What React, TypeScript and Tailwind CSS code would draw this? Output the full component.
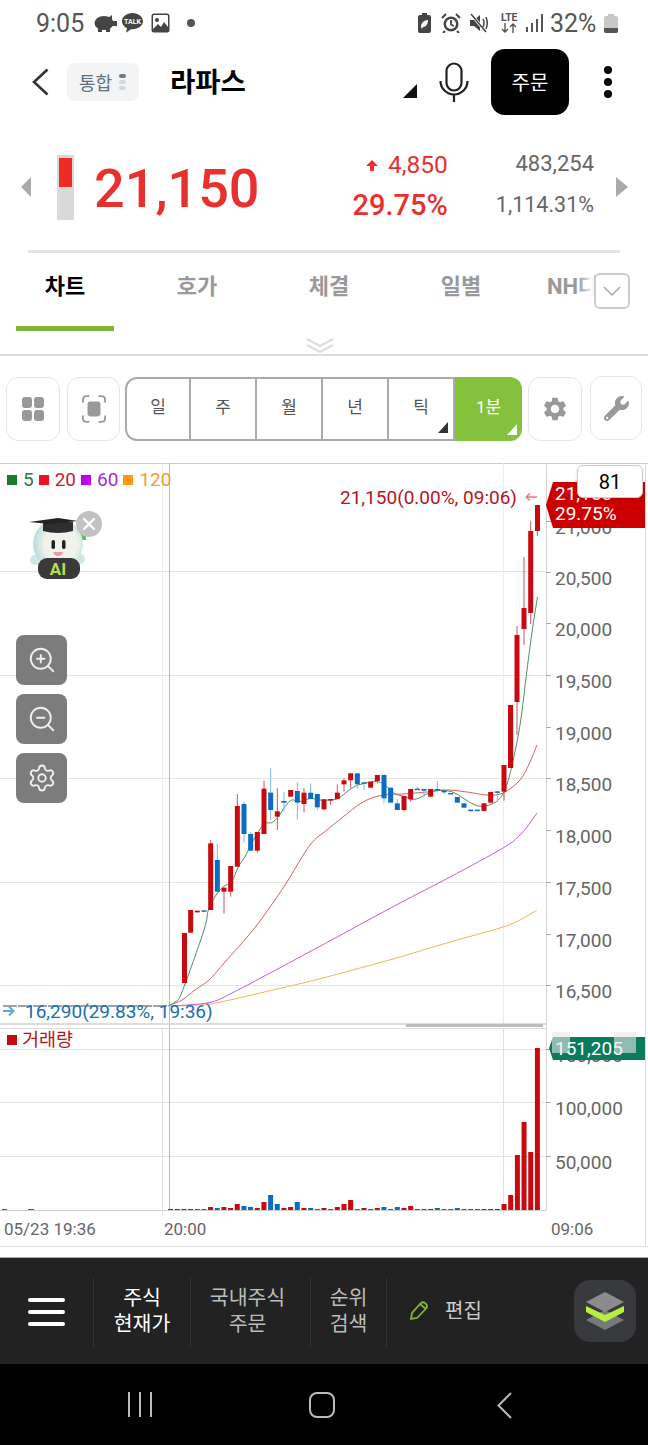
import React from "react";
import { Settings, ZoomIn, ZoomOut } from "lucide-react";
import { FaWrench } from "react-icons/fa";
import { MdSettings } from "react-icons/md";

const RED = "#c60a10";
const BLUE = "#0a6cc2";

// candles: x, bodyTop, bodyBottom, wickTop, wickBottom in crop units (170,750 at 3x)
const candles: [number, number, number, number, number, "r" | "b"][] = [
  [62, 480, 548, 480, 548, "r"], [82, 482, 487, 482, 487, "r"], [102, 481, 484, 481, 484, "b"],
  [122, 280, 480, 270, 480, "r"], [142, 330, 425, 282, 425, "b"], [162, 413, 425, 413, 490, "r"],
  [182, 348, 425, 348, 440, "r"], [202, 168, 350, 132, 350, "r"], [222, 162, 252, 155, 278, "b"],
  [242, 252, 302, 245, 302, "b"], [262, 246, 302, 246, 308, "r"], [282, 116, 252, 92, 252, "r"],
  [302, 128, 180, 55, 210, "b"], [322, 184, 200, 115, 240, "r"], [342, 153, 158, 125, 185, "b"],
  [362, 120, 140, 120, 140, "r"], [382, 123, 158, 97, 208, "b"], [402, 128, 162, 115, 187, "r"],
  [422, 128, 147, 100, 147, "b"], [442, 132, 172, 132, 180, "b"], [462, 148, 178, 148, 180, "r"],
  [482, 147, 150, 147, 165, "r"], [502, 128, 147, 103, 147, "r"], [522, 91, 103, 85, 125, "r"],
  [542, 70, 91, 70, 115, "r"], [562, 70, 103, 70, 115, "b"], [582, 97, 100, 97, 120, "b"],
  [602, 95, 113, 95, 113, "r"], [622, 75, 93, 75, 100, "r"], [642, 75, 145, 72, 160, "b"],
  [662, 113, 158, 113, 158, "b"], [682, 160, 180, 148, 180, "b"], [702, 138, 180, 138, 185, "r"],
  [722, 117, 148, 117, 155, "r"], [742, 116, 119, 110, 119, "b"], [762, 117, 122, 117, 140, "b"],
  [782, 117, 140, 117, 140, "r"], [802, 117, 119, 93, 125, "b"], [822, 122, 127, 117, 132, "b"],
  [842, 129, 132, 129, 132, "b"], [862, 141, 158, 141, 158, "b"], [882, 160, 173, 160, 173, "b"],
  [902, 179, 181, 179, 185, "b"], [922, 179, 183, 179, 183, "b"], [942, 160, 183, 160, 183, "r"],
  [962, 126, 158, 126, 158, "r"], [982, 124, 127, 124, 155, "b"], [1002, 45, 125, 45, 152, "r"],
  [1022, -135, 53, -135, 53, "r"],
];

const greenPoints: [number, number][] = [
  [102, 540], [115, 480], [135, 440], [160, 410], [185, 395], [205, 350], [225, 320], [245, 280], [265, 245], [285, 220],
  [305, 218], [325, 200], [345, 170], [365, 150], [385, 155], [405, 150], [425, 145], [445, 150], [465, 150], [485, 150],
  [505, 145], [525, 130], [545, 115], [565, 105], [585, 100], [605, 95], [625, 95], [645, 105], [665, 125], [685, 135],
  [705, 140], [725, 148], [745, 145], [765, 135], [785, 125], [805, 120], [825, 122], [845, 125], [865, 135], [885, 148],
  [905, 160], [925, 168], [945, 168], [965, 162], [985, 150], [1005, 120], [1025, 50],
];

type Pt = [number, number];

// catmull-rom through the points so the averages don't look kinked
const smooth = (pts: Pt[]) => {
  let d = `M${pts[0][0]} ${pts[0][1]}`;
  for (let i = 0; i < pts.length - 1; i++) {
    const p0 = pts[Math.max(i - 1, 0)];
    const p1 = pts[i];
    const p2 = pts[i + 1];
    const p3 = pts[Math.min(i + 2, pts.length - 1)];
    const c1x = p1[0] + (p2[0] - p0[0]) / 6;
    const c1y = p1[1] + (p2[1] - p0[1]) / 6;
    const c2x = p2[0] - (p3[0] - p1[0]) / 6;
    const c2y = p2[1] - (p3[1] - p1[1]) / 6;
    d += `C${c1x} ${c1y} ${c2x} ${c2y} ${p2[0]} ${p2[1]}`;
  }
  return d;
};

const greenLine = smooth([
  [168, 1006], [175, 1002], [182, 992],
  ...greenPoints.map((p): Pt => [170 + p[0] / 3, 750 + p[1] / 3]),
  [520, 725], [527, 670], [532, 632], [537.5, 597],
]);
const redLine = smooth([
  [170, 1005], [182, 1000], [195, 990], [209, 980], [225, 962], [253, 930], [270, 907], [287, 882], [310, 845], [327, 830],
  [343, 817], [363, 802], [383, 795], [403, 794], [427, 792], [447, 790], [467, 792], [487, 795], [503, 793], [520, 780], [530, 762], [537, 745],
]);
const purpleLine = smooth([
  [170, 1006], [187, 1005], [212, 1002], [232, 993], [257, 980], [300, 957], [350, 930], [400, 903], [450, 877], [503, 848], [520, 835], [530, 823], [537, 813],
]);
const orangeLine = smooth([
  [175, 1006], [199, 1005], [216, 1003], [260, 993], [315, 980], [360, 968], [400, 957], [450, 942], [500, 928], [520, 920], [537, 910],
]);

const priceTicks = [521, 572, 623, 675, 727, 778, 830, 882, 934, 985];
const priceLabels = ["21,000", "20,500", "20,000", "19,500", "19,000", "18,500", "18,000", "17,500", "17,000", "16,500"];
const gridLines = [571.5, 675.5, 778.5, 882.5, 985.5, 1049.5, 1102.5, 1156.5];

// volume bars from x=170 to the last candle, height in px
const volumes: [number, string][] = [
  [1, "r"], [1, "r"], [1, "r"], [1, "r"], [1, "g"], [1, "g"], [3, "r"], [2, "b"], [3, "r"], [2, "r"],
  [6, "r"], [4, "b"], [3, "b"], [2, "r"], [8, "r"], [15, "b"], [6, "b"], [2, "r"], [3, "r"], [8, "b"],
  [2, "r"], [2, "b"], [1, "b"], [2, "r"], [1, "g"], [3, "r"], [6, "r"], [10, "r"], [1, "b"], [2, "r"],
  [1, "b"], [2, "r"], [3, "b"], [1, "b"], [3, "b"], [2, "r"], [4, "r"], [1, "g"], [1, "g"], [1, "r"],
  [2, "g"], [1, "b"], [1, "b"], [2, "b"], [1, "b"], [1, "b"], [1, "b"], [1, "r"], [1, "r"], [1, "r"],
  [6, "r"], [15, "r"], [55, "r"], [88, "r"], [58, "r"], [162, "r"],
];
const barColor: Record<string, string> = { r: RED, b: BLUE, g: "#157a55" };

const PriceChart = () => (
  <svg viewBox="0 463 648 784" width={648} height={784} className="block">
    {/* grid */}
    {gridLines.map((y) => (
      <line key={y} x1={0} x2={546} y1={y} y2={y} stroke="#e6e6e6" />
    ))}
    <line x1={162.5} x2={162.5} y1={463} y2={1023} stroke="#ececec" />
    <line x1={503.5} x2={503.5} y1={463} y2={1023} stroke="#ececec" />
    <line x1={162.5} x2={162.5} y1={1028} y2={1215} stroke="#e0e0e0" />
    <line x1={503.5} x2={503.5} y1={1028} y2={1215} stroke="#e0e0e0" />
    <line x1={169.5} x2={169.5} y1={463} y2={1210} stroke="#eaa4a8" />

    {/* moving averages */}
    <line x1={3} x2={168} y1={1006} y2={1006} stroke="#444" strokeDasharray="14 1" />
    <path d={orangeLine} fill="none" stroke="#ecb85c" />
    <path d={purpleLine} fill="none" stroke="#c060e0" />
    <path d={redLine} fill="none" stroke="#d86060" />
    <path d={greenLine} fill="none" stroke="#4f8f60" />

    {/* candles */}
    <line x1={184.5} x2={184.5} y1={933} y2={983} stroke={RED} strokeWidth={5} />
    {candles.map(([x, top, bottom, wickTop, wickBottom, c]) => {
      const px = 170 + x / 3;
      const color = c === "r" ? RED : BLUE;
      return (
        <g key={x}>
          <line x1={px} x2={px} y1={750 + wickTop / 3} y2={750 + wickBottom / 3} stroke={c === "r" ? "#d0555a" : "#7ab8e8"} />
          <rect x={px - 2.5} y={750 + top / 3} width={5} height={Math.max((bottom - top) / 3, 1.5)} fill={color} />
        </g>
      );
    })}
    <line x1={517} x2={517} y1={626} y2={735} stroke="#b06060" />
    <rect x={514.5} y={635} width={5} height={67} fill={RED} />
    <rect x={508} y={705} width={5} height={63} fill={RED} />
    <line x1={524} x2={524} y1={557} y2={645} stroke="#d0555a" />
    <rect x={521.5} y={608} width={5} height={21} fill={RED} />
    <line x1={530.7} x2={530.7} y1={521} y2={624} stroke="#d0555a" />
    <rect x={528.2} y={531} width={5} height={82} fill={RED} />
    <line x1={537.4} x2={537.4} y1={505} y2={536} stroke="#d0555a" />
    <rect x={535} y={505} width={5} height={26} fill={RED} />

    {/* price axis */}
    <line x1={546.5} x2={546.5} y1={463} y2={1210} stroke="#d4d4d4" />
    {priceTicks.map((y, i) => (
      <g key={y}>
        <line x1={546} x2={551} y1={y + 0.5} y2={y + 0.5} stroke="#aaa" />
        <text x={555} y={y + 13} fontSize={19} fill="#666">
          {priceLabels[i]}
        </text>
      </g>
    ))}
    <text x={340} y={504} fontSize={19} fill="#b8141c">
      21,150(0.00%, 09:06)
    </text>
    <path d="M526 497h11M526 497l4-3.5M526 497l4 3.5" fill="none" stroke="#e87a7a" strokeWidth={1.6} />
    <path d="M546 505l7-23h92v46h-92z" fill="#cc0000" />
    <text x={555} y={500} fontSize={19} fill="#fff">
      21,150
    </text>
    <text x={555} y={520} fontSize={19} fill="#fff">
      29.75%
    </text>
    <path d="M3 1011h10M9 1006.5l4.5 4.5-4.5 4.5" fill="none" stroke="#55aaf0" strokeWidth={2} />
    <text x={25} y={1018} fontSize={19} fill="#1a6fb0">
      16,290(29.83%, 19:36)
    </text>

    {/* panel split */}
    <rect x={0} y={1023} width={546} height={2} fill="#dddddd" />
    <rect x={406} y={1024} width={137} height={3} fill="#bdbdbd" />
    <rect x={0} y={1028} width={546} height={1} fill="#dddddd" />

    {/* volume */}
    <line x1={0} x2={546} y1={1210.5} y2={1210.5} stroke="#cfcfcf" />
    <rect x={2} y={1209} width={5} height={1} fill="#157a55" />
    <rect x={28} y={1209} width={6} height={1} fill="#157a55" />
    {volumes.map(([h, c], i) => (
      <rect key={i} x={537.4 - 6.67 * (volumes.length - 1 - i) - 2.5} y={1210 - h} width={5} height={h} fill={barColor[c]} />
    ))}
    {[
      { y: 1049, label: "150,000" },
      { y: 1102, label: "100,000" },
      { y: 1156, label: "50,000" },
    ].map(({ y, label }) => (
      <g key={label}>
        <line x1={546} x2={551} y1={y + 0.5} y2={y + 0.5} stroke="#aaa" />
        <text x={555} y={y + 13} fontSize={19} fill="#666">
          {label}
        </text>
      </g>
    ))}
    <path d="M549 1048l4-11h92v23h-92z" fill="#0c7b5d" />
    <text x={555} y={1055} fontSize={19} fill="#fff">
      151,205
    </text>
    <rect x={552} y={1032} width={18} height={21} fill="#e8e8e8" opacity={0.6} />
    <rect x={614} y={1032} width={22} height={21} fill="#e8e8e8" opacity={0.6} />

    {/* time axis */}
    <text x={4} y={1235} fontSize={17} fill="#666">
      05/23 19:36
    </text>
    <text x={164} y={1235} fontSize={17} fill="#666">
      20:00
    </text>
    <text x={551} y={1235} fontSize={17} fill="#666">
      09:06
    </text>
  </svg>
);

const AiBuddy = () => (
  <svg viewBox="26 508 78 76" width={78} height={76} className="block">
    <defs>
      <radialGradient id="head" cx="0.55" cy="0.5" r="0.6">
        <stop offset="0.55" stopColor="#f1f3ea" />
        <stop offset="1" stopColor="#a9d6da" />
      </radialGradient>
    </defs>
    <rect x={78} y={533} width={8} height={7} fill="#5cc05c" />
    <circle cx={35} cy={560} r={5} fill="#cfe6e6" />
    <circle cx={80} cy={559} r={5} fill="#cfe6e6" />
    <circle cx={58} cy={544} r={25} fill="url(#head)" />
    <path d="M43 522h30v9q-15 4-30 0z" fill="#2e2e2e" />
    <path d="M29 522l29-4 20 3-28 3z" fill="#222" />
    <rect x={51.5} y={540} width={3.5} height={9} rx={1.7} fill="#222" />
    <rect x={62} y={540} width={3.5} height={9} rx={1.7} fill="#222" />
    <path d="M53 552h10q-1 4-5 4t-5-4z" fill="#ee9aa6" />
    <rect x={38} y={558} width={42} height={21} rx={9} fill="#3a3a3a" />
    <text x={58} y={575} fontSize={17} fontWeight={700} textAnchor="middle" fill="#b4e04a">
      AI
    </text>
    <circle cx={89} cy={524} r={13} fill="#c2c2c2" />
    <path d="M84 519l10 10M94 519l-10 10" stroke="#fff" strokeWidth={2.4} strokeLinecap="round" />
  </svg>
);

const ChartTool = ({ children }: { children: React.ReactNode }) => (
  <div className="w-[51px] h-[50px] rounded-lg bg-[#6e6e6e]/90 flex items-center justify-center text-[#eeeeee]">
    {children}
  </div>
);

const LegendItem = ({ box, text, label }: { box: string; text: string; label: string }) => (
  <div className="flex items-center gap-[6px]">
    <span className={`w-[10px] h-[10px] ${box}`}></span>
    <span className={`text-[19px] leading-none ${text}`}>{label}</span>
  </div>
);

const StatusBar = () => (
  <div className="h-[46px] flex items-center pl-[36px] text-[#555555]">
    <span className="text-[25px] leading-none w-[57px]">9:05</span>
    <svg viewBox="0 0 24 18" width={24} height={18} fill="#444" className="mr-[4px]">
      <ellipse cx={11} cy={9} rx={9.5} ry={7} />
      <path d="M15 4l4-3v5zM17 7h7v5h-7zM5 14h4v4H5zM13 14h4v4h-4z" />
    </svg>
    <svg viewBox="0 0 23 22" width={23} height={22} className="mr-[7px]">
      <path d="M11.5 1C5.7 1 1 4.7 1 9.3c0 3 2 5.5 5 7l-1 4.5 5-3.6h1.5C17.3 17.2 22 13.6 22 9.3S17.3 1 11.5 1z" fill="#444" />
      <text x={11.5} y={12} fontSize={7} fontWeight={700} textAnchor="middle" fill="#fff">
        TALK
      </text>
    </svg>
    <svg viewBox="0 0 19 20" width={19} height={20} className="mr-[17px]">
      <rect x={0.5} y={0.5} width={18} height={19} rx={2.5} fill="#444" />
      <rect x={2} y={2} width={15} height={16} rx={1} fill="#fff" />
      <circle cx={6} cy={7} r={2} fill="#444" />
      <path d="M2 16l5-5 3 3 3-5 4 5v4H2z" fill="#444" />
    </svg>
    <span className="w-[8px] h-[8px] rounded-full bg-[#555555]"></span>

    <svg viewBox="0 0 13 20" width={13} height={20} className="ml-[223px]">
      <path d="M4 0h5v2h2q2 0 2 2v14q0 2-2 2H2q-2 0-2-2V4q0-2 2-2h2z" fill="#444" />
      <path d="M3 14c0-4 3-7 7-7 0 4-2 7-5 7l-1 2z" fill="#fff" />
    </svg>
    <svg viewBox="0 0 20 20" width={20} height={20} className="ml-[10px]">
      <circle cx={10} cy={11} r={7.5} fill="#444" />
      <circle cx={10} cy={11} r={5} fill="#fff" />
      <path d="M10 7v4.5l3 1.5" stroke="#444" strokeWidth={1.8} fill="none" />
      <path d="M1 5l4-4M19 5l-4-4M4 18l-2 2M16 18l2 2" stroke="#444" strokeWidth={2} />
    </svg>
    <svg viewBox="0 0 18 20" width={18} height={20} className="ml-[9px]">
      <path d="M0 7h4l6-5v16l-6-5H0z" fill="#444" />
      <path d="M1 1l15 18" stroke="#fff" strokeWidth={3} />
      <path d="M1 1l15 18" stroke="#444" strokeWidth={1.5} />
      <path d="M13 6q2 4 0 8M16 4q2.5 6 0 12" stroke="#444" strokeWidth={1.5} fill="none" />
    </svg>
    <div className="ml-[11px] w-[20px] h-[22px] flex flex-col items-center">
      <span className="text-[10.5px] leading-[11px] font-bold tracking-tight">LTE</span>
      <svg viewBox="0 0 18 10" width={18} height={10}>
        <path d="M5 0v9M2 6l3 3 3-3M13 10V1M10 4l3-3 3 3" stroke="#555" strokeWidth={1.4} fill="none" />
      </svg>
    </div>
    <svg viewBox="0 0 17 18" width={17} height={18} className="ml-[7px]" fill="#555">
      <rect x={0} y={13} width={2} height={5} />
      <rect x={5} y={9} width={2} height={9} />
      <rect x={10} y={5} width={2} height={13} />
      <rect x={15} y={0} width={2} height={18} />
    </svg>
    <span className="ml-[7px] text-[25px] leading-none w-[53px]">32%</span>
    <svg viewBox="0 0 14 19" width={14} height={19} className="ml-[1px]">
      <path d="M4 0h6v2h2q2 0 2 2v13q0 2-2 2H2q-2 0-2-2V4q0-2 2-2h2z" fill="#c8c8c8" />
      <path d="M0 14h14v3q0 2-2 2H2q-2 0-2-2z" fill="#555" />
    </svg>
  </div>
);

const Header = () => (
  <div className="h-[72px] flex items-center relative">
    <svg viewBox="0 0 18 28" width={18} height={28} fill="none" stroke="#333333" strokeWidth={2.6} className="ml-[31px]">
      <path d="M16.5 1.5L3 14l13.5 12.5" />
    </svg>
    <div className="ml-[18px] w-[72px] h-[38px] bg-[#f2f4f5] rounded-lg flex items-center pl-[12px] gap-[7px] text-[18px] text-[#5f707c]">
      <span className="pt-[2px]">통합</span>
      <div className="flex flex-col gap-[2px]">
        <span className="w-[7px] h-[4px] rounded-sm bg-[#6c7a84]"></span>
        <span className="w-[7px] h-[4px] rounded-sm bg-[#d5d9dc]"></span>
        <span className="w-[7px] h-[4px] rounded-sm bg-[#d5d9dc]"></span>
      </div>
    </div>
    <span className="ml-[31px] pt-[2px] text-[27.5px] font-bold text-black">라파스</span>
    <svg viewBox="0 0 14 14" width={14} height={14} className="absolute left-[403px] top-[38px]">
      <path d="M14 0v14H0z" fill="#111" />
    </svg>
    <svg viewBox="0 0 30 40" width={30} height={40} fill="none" stroke="#222" strokeWidth={2.2} className="ml-auto mr-[22px]">
      <rect x={7.5} y={1.5} width={15} height={27} rx={7.5} />
      <path d="M1.5 19a13.5 13.5 0 0 0 27 0M15 32.5V40" />
    </svg>
    <button className="w-[78px] h-[66px] rounded-[14px] bg-black text-white text-[20px] pt-[2px]">주문</button>
    <div className="w-[79px] pr-[2px] flex flex-col items-center gap-[4px]">
      <span className="w-[8px] h-[8px] rounded-full bg-black"></span>
      <span className="w-[8px] h-[8px] rounded-full bg-black"></span>
      <span className="w-[8px] h-[8px] rounded-full bg-black"></span>
    </div>
  </div>
);

const PriceRow = () => (
  <div className="h-[132px] pt-[6px] flex items-center relative">
    <svg viewBox="0 0 10 20" width={10} height={20} className="ml-[21px]">
      <path d="M10 0v20L0 10z" fill="#aaaaaa" />
    </svg>
    <div className="ml-[26px] w-[17px] h-[65px] bg-[#d9d9d9] px-[2px] pt-[3px]">
      <div className="h-[29px] bg-[#ee2b24]"></div>
    </div>
    <span className="ml-[20px] mt-[3px] text-[54px] leading-none font-medium text-[#e8302e]">21,150</span>
    <div className="ml-auto mb-[4px] flex flex-col items-end gap-[9px] text-[#e8302e]">
      <div className="flex items-center gap-[10px] h-[30px]">
        <svg viewBox="0 0 12 11" width={12} height={11}>
          <path d="M6 0l6 6H8v5H4V6H0z" fill="#e8302e" />
        </svg>
        <span className="text-[24.5px] leading-none">4,850</span>
      </div>
      <span className="text-[29px] leading-[30px] font-medium">29.75%</span>
    </div>
    <div className="ml-[48px] mb-[6px] flex flex-col items-end gap-[11px] text-[#666666]">
      <span className="text-[22px] leading-[30px]">483,254</span>
      <span className="text-[21.5px] leading-[30px]">1,114.31%</span>
    </div>
    <svg viewBox="0 0 12 20" width={12} height={20} className="ml-[22px] mr-[20px]">
      <path d="M0 0v20l12-10z" fill="#aaaaaa" />
    </svg>
  </div>
);

const Tabs = () => (
  <div className="h-[101px] relative overflow-hidden">
    <div className="flex gap-[34px] pl-4 pt-[19px] text-[22px] font-bold text-[#999999]">
      <div className="w-[98px] h-[59px] flex flex-col items-center justify-between">
        <span className="text-black leading-[30px]">차트</span>
        <span className="w-[98px] h-[5px] bg-[#84b339]"></span>
      </div>
      <span className="w-[98px] text-center leading-[30px]">호가</span>
      <span className="w-[98px] text-center leading-[30px]">체결</span>
      <span className="w-[98px] text-center leading-[30px]">일별</span>
      <span className="w-[98px] pl-[3px] leading-[30px] whitespace-nowrap">NH다</span>
    </div>
    <div className="absolute left-[578px] top-[20px] w-[16px] h-[32px] bg-gradient-to-r from-white/0 to-white"></div>
    <div className="absolute left-[594px] top-[20px] w-[36px] h-[36px] bg-white border-2 border-[#cccccc] rounded-md flex items-center justify-center">
      <svg viewBox="0 0 18 10" width={18} height={10} fill="none" stroke="#aaaaaa" strokeWidth={1.5}>
        <path d="M1 1l8 8 8-8" />
      </svg>
    </div>
    <svg viewBox="0 0 28 15" width={28} height={15} fill="none" stroke="#dddddd" strokeWidth={2} className="absolute left-[306px] top-[85px]">
      <path d="M1 1l13 7 13-7M1 7l13 7 13-7" />
    </svg>
  </div>
);

const SquareButton = ({ children, w }: { children: React.ReactNode; w: string }) => (
  <div className={`${w} h-[64px] rounded-xl border border-[#e6e6e6] flex items-center justify-center text-[#999999]`}>
    {children}
  </div>
);

const Corner = ({ color }: { color: string }) => (
  <svg viewBox="0 0 10 11" width={10} height={11} className="absolute right-[5px] bottom-[6px]">
    <path d="M10 0v11H0z" fill={color} />
  </svg>
);

const Toolbar = () => (
  <div className="h-[107px] pt-[21px] pl-[6px] flex items-start">
    <SquareButton w="w-[54px]">
      <div className="grid grid-cols-2 gap-[2px]">
        <span className="w-[10px] h-[11px] rounded-[3px] bg-[#999999]"></span>
        <span className="w-[10px] h-[11px] rounded-[3px] bg-[#999999]"></span>
        <span className="w-[10px] h-[11px] rounded-[3px] bg-[#999999]"></span>
        <span className="w-[10px] h-[11px] rounded-[3px] bg-[#999999]"></span>
      </div>
    </SquareButton>
    <div className="ml-[7px]">
      <SquareButton w="w-[53px]">
        <svg viewBox="0 0 26 30" width={24} height={28} fill="none" stroke="#999999" strokeWidth={2}>
          <path d="M1 8V5q0-4 4-4h3M18 1h3q4 0 4 4v3M25 22v3q0 4-4 4h-3M8 29H5q-4 0-4-4v-3" />
          <rect x={6} y={7} width={14} height={16} rx={3} fill="#999999" stroke="none" />
        </svg>
      </SquareButton>
    </div>
    <div className="ml-[5px] flex h-[64px] text-[17px] text-[#555555]">
      <div className="w-[66px] border-2 border-[#aaaaaa] rounded-l-xl flex items-center justify-center pb-[2px]">일</div>
      <div className="w-[66px] border-y-2 border-r-2 border-[#aaaaaa] flex items-center justify-center pb-[2px]">주</div>
      <div className="w-[66px] border-y-2 border-r-2 border-[#aaaaaa] flex items-center justify-center pb-[2px]">월</div>
      <div className="w-[66px] border-y-2 border-r-2 border-[#aaaaaa] flex items-center justify-center pb-[2px]">년</div>
      <div className="relative w-[66px] border-y-2 border-r-2 border-[#aaaaaa] flex items-center justify-center pb-[2px]">
        틱
        <Corner color="#333333" />
      </div>
      <div className="relative w-[67px] bg-[#84c13d] rounded-r-xl text-white flex items-center justify-center pb-[2px]">
        1분
        <Corner color="#ffffff" />
      </div>
    </div>
    <div className="ml-[6px]">
      <SquareButton w="w-[54px]">
        <MdSettings size={28} />
      </SquareButton>
    </div>
    <div className="ml-[8px] -mt-px">
      <SquareButton w="w-[52px]">
        <FaWrench size={25} />
      </SquareButton>
    </div>
  </div>
);

const ChartPanel = () => (
  <div className="relative h-[794px] bg-white border-t border-[#cccccc]">
    <div className="absolute inset-x-0 top-[-1px]">
      <PriceChart />
    </div>
    <div className="absolute left-[645px] top-0 w-px h-[783px] bg-[#dddddd]"></div>
    <div className="absolute left-0 top-[782px] w-[648px] h-px bg-[#dddddd]"></div>

    {/* legend */}
    <div className="absolute left-[7px] top-[6px] flex items-center gap-[5px]">
      <LegendItem box="bg-[#1b7a2c]" text="text-[#2b7a3c]" label="5" />
      <LegendItem box="bg-[#ee1122]" text="text-[#c8202e]" label="20" />
      <LegendItem box="bg-[#c000f0]" text="text-[#a82bd6]" label="60" />
      <LegendItem box="bg-[#ff9a10]" text="text-[#eca030]" label="120" />
    </div>
    <div className="absolute left-[26px] top-[44px]">
      <AiBuddy />
    </div>
    <div className="absolute left-[16px] top-[171px] flex flex-col gap-[9px]">
      <ChartTool>
        <ZoomIn size={30} strokeWidth={1.5} />
      </ChartTool>
      <ChartTool>
        <ZoomOut size={30} strokeWidth={1.5} />
      </ChartTool>
      <ChartTool>
        <Settings size={30} strokeWidth={1.5} />
      </ChartTool>
    </div>

    {/* crosshair value */}
    <div className="absolute left-[577px] top-[1px] w-[66px] h-[33px] bg-white border border-[#cccccc] rounded-md flex items-center justify-center text-[20px] text-black shadow-sm">
      81
    </div>
    <div className="absolute left-[7px] top-[567px] flex items-center gap-[5px] text-[#b8141c] text-[18.5px] leading-none">
      <span className="w-[10px] h-[10px] bg-[#c60a10]"></span>
      <span>거래량</span>
    </div>
  </div>
);

const BottomNav = () => (
  <div className="h-[107px] bg-[#222222] border-t border-[#aaaaaa] flex items-center relative">
    <div className="w-[94px] h-[69px] mt-[2px] border-r border-[#333333] flex flex-col items-center justify-center gap-[8px] pl-[1px] pr-[2px]">
      <span className="w-[37px] h-[4px] rounded-full bg-white"></span>
      <span className="w-[37px] h-[4px] rounded-full bg-white"></span>
      <span className="w-[37px] h-[4px] rounded-full bg-white"></span>
    </div>
    <div className="w-[97px] h-[69px] mt-[2px] pb-[2px] border-r border-[#333333] flex items-center justify-center text-center text-[20.5px] leading-[26px] text-white">
      주식
      <br />
      현재가
    </div>
    <div className="w-[120px] h-[69px] mt-[2px] pb-[2px] pr-[6px] border-r border-[#333333] flex items-center justify-center text-center text-[20.5px] leading-[26px] text-[#bbbbbb]">
      국내주식
      <br />
      주문
    </div>
    <div className="w-[76px] h-[69px] mt-[2px] pb-[2px] border-r border-[#333333] flex items-center justify-center text-center text-[20.5px] leading-[26px] text-[#bbbbbb]">
      순위
      <br />
      검색
    </div>
    <svg viewBox="0 0 20 20" width={20} height={20} fill="none" stroke="#7fb23a" strokeWidth={1.8} className="ml-[22px]">
      <path d="M2 18l1-6L12 2q2-1.5 4 0l1.5 1.5q1 2 0 3.5L8 17z" />
      <path d="M11 3l6 5" />
    </svg>
    <span className="ml-[16px] text-[20px] text-[#cccccc]">편집</span>
    <div className="ml-auto mr-[12px] w-[62px] h-[62px] rounded-2xl bg-[#37393c] flex items-center justify-center">
      <svg viewBox="0 0 38 40" width={38} height={40}>
        <path d="M19 19L0 29l19 10 19-10z" fill="#77797c" />
        <path d="M19 1L0 11l19 10 19-10z" fill="#8c8c8c" />
        <path d="M0 15l19 9 19-9v6l-19 10L0 21z" fill="#b6f03e" />
      </svg>
    </div>
  </div>
);

const AndroidNav = () => (
  <div className="h-[81px] bg-black relative">
    <div className="absolute left-[128px] top-[28px] flex gap-[9px]">
      <span className="w-[2px] h-[25px] bg-[#bbbbbb]"></span>
      <span className="w-[2px] h-[25px] bg-[#bbbbbb]"></span>
      <span className="w-[2px] h-[25px] bg-[#bbbbbb]"></span>
    </div>
    <div className="absolute left-[309px] top-[28px] w-[26px] h-[26px] rounded-lg border-2 border-[#bbbbbb]"></div>
    <svg viewBox="0 0 15 27" width={15} height={27} fill="none" stroke="#bbbbbb" strokeWidth={2} className="absolute left-[497px] top-[28px]">
      <path d="M14 1L1.5 13.5 14 26" />
    </svg>
  </div>
);

export default function App() {
  return (
    <div className="w-[648px] h-[1445px] overflow-hidden bg-white font-[Roboto,'Noto_Sans_CJK_KR',sans-serif]">
      <StatusBar />
      <Header />
      <PriceRow />
      <div className="mx-[28px] h-[3px] bg-[#e3e3e3]"></div>
      <Tabs />
      <div className="h-[2px] bg-[#dddddd]"></div>
      <Toolbar />
      <ChartPanel />
      <BottomNav />
      <AndroidNav />
    </div>
  );
}
